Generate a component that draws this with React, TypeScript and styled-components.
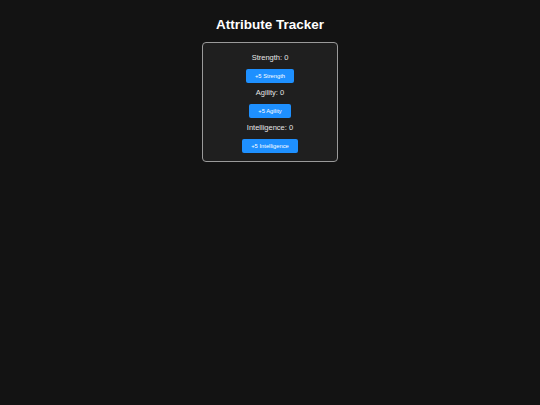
import React, { useState } from "react";
import styled, { createGlobalStyle } from "styled-components";

const GlobalStyle = createGlobalStyle`
  html, body {
    margin: 0;
    padding: 0;
    background: #131313;
    font-family: "Liberation Sans", Arial, sans-serif;
  }
`;

type Attr = { key: string; label: string };

const attributes: Attr[] = [
  { key: "strength", label: "Strength" },
  { key: "agility", label: "Agility" },
  { key: "intelligence", label: "Intelligence" },
];

export default function App() {
  const [values, setValues] = useState<Record<string, number>>({
    strength: 0,
    agility: 0,
    intelligence: 0,
  });

  const add = (key: string) =>
    setValues((v) => ({ ...v, [key]: v[key] + 5 }));

  return (
    <>
      <GlobalStyle />
      <Page>
        <Title>Attribute Tracker</Title>
        <Card>
          {attributes.map((a) => (
            <Row key={a.key}>
              <Label>
                {a.label}: {values[a.key]}
              </Label>
              <Button onClick={() => add(a.key)}>+5 {a.label}</Button>
            </Row>
          ))}
        </Card>
      </Page>
    </>
  );
}

const Page = styled.div`
  display: flex;
  flex-direction: column;
  align-items: center;
  padding-top: 17px;
`;

const Title = styled.h1`
  margin: 0 0 9px;
  font-size: 13.5px;
  line-height: 16px;
  font-weight: bold;
  color: #ffffff;
`;

const Card = styled.div`
  box-sizing: border-box;
  width: 136px;
  padding: 10px 0 8px;
  background: #1f1f1f;
  border: 1px solid #9a9a9a;
  border-radius: 4px;
  display: flex;
  flex-direction: column;
  align-items: center;
  gap: 5px;
`;

const Row = styled.div`
  display: flex;
  flex-direction: column;
  align-items: center;
  gap: 6px;
`;

const Label = styled.div`
  font-size: 7.5px;
  line-height: 10px;
  color: #e6e6e6;
`;

const Button = styled.button`
  height: 14px;
  padding: 0 9px;
  border: none;
  border-radius: 2px;
  background: #1e90ff;
  color: #ffffff;
  font-family: "Liberation Sans", Arial, sans-serif;
  font-size: 5.8px;
  line-height: 14px;
  cursor: pointer;
`;
